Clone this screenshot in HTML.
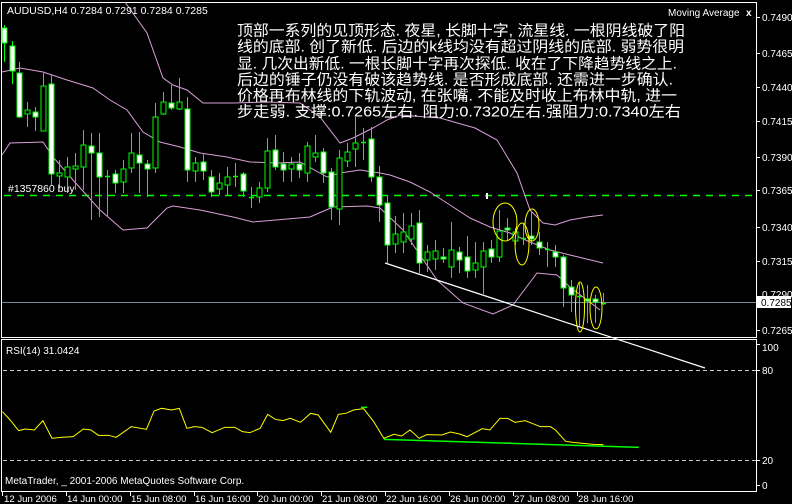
<!DOCTYPE html>
<html><head><meta charset="utf-8"><style>
html,body{margin:0;padding:0;background:#000;}
body{width:792px;height:504px;overflow:hidden;position:relative;}
svg{position:absolute;left:0;top:0;}
text{font-family:"Liberation Sans",sans-serif;}
</style></head><body>
<svg id="s" width="792" height="504" viewBox="0 0 792 504" xmlns="http://www.w3.org/2000/svg">
<rect x="0" y="0" width="792" height="504" fill="#000"/>
<rect x="1.5" y="2.5" width="755" height="335" fill="none" stroke="#fff" stroke-width="1"/>
<rect x="1.5" y="339.5" width="755" height="152" fill="none" stroke="#fff" stroke-width="1"/>
<line x1="4" y1="195.5" x2="756" y2="195.5" stroke="#00ff00" stroke-width="1.6" stroke-dasharray="7,6"/>
<rect x="486" y="193" width="2" height="6" fill="#fff"/>
<line x1="2" y1="302.5" x2="756" y2="302.5" stroke="#778899" stroke-width="1"/>
<g fill="none" stroke="#d8a0d8" stroke-width="1">
<polyline points="125,2 147,33 163,78 173,85 187,90 203,103 233,103 267,102 300,103 320,117 340,143 353,138 373,128 387,120 400,115 440,118 475,128 497,140 517,173 530,210 543,223 555,225 570,220 587,217 603,215"/>
<polyline points="2,72 20,68 43,72 67,80 93,88 110,100 127,110 143,132 160,142 180,147 200,153 227,157 250,162 277,163 300,162 327,177 340,173 360,170 380,173 390,175 410,182 430,192 450,205 470,218 490,227 510,233 530,242 550,250 570,255 603,263"/>
<polyline points="2,155 10,143 43,142 53,157 73,180 100,210 123,230 147,228 167,208 173,206 200,210 233,217 253,222 310,217 333,207 367,206 380,208 403,230 437,280 463,303 493,314 513,305 537,273 557,275 570,287 600,310"/>
</g>
<g id="candles"></g>
<line x1="385" y1="263" x2="705" y2="368" stroke="#fff" stroke-width="1.2"/>
<g fill="none" stroke="#ffff00" stroke-width="1">
<ellipse cx="505" cy="222" rx="12" ry="19"/>
<ellipse cx="522" cy="244" rx="7" ry="21"/>
<ellipse cx="532" cy="225" rx="7" ry="16"/>
<ellipse cx="580" cy="307" rx="4.5" ry="25"/>
<ellipse cx="596" cy="308" rx="6" ry="21"/>
</g>
<text x="7" y="14" font-size="10.5" fill="#fff">AUDUSD,H4  0.7284 0.7291 0.7284 0.7285</text>
<text x="668" y="16" font-size="10" fill="#fff">Moving Average</text>
<text x="746" y="16" font-size="10" font-weight="bold" fill="#fff">x</text>
<text x="8" y="192" font-size="10.5" fill="#fff">#1357860 buy</text>
<g font-size="15" fill="#fff">
<text x="237" y="35.5" textLength="448" lengthAdjust="spacingAndGlyphs" style="font-family:'Liberation Sans','Noto Sans CJK SC',sans-serif">顶部一系列的见顶形态. 夜星, 长脚十字, 流星线. 一根阴线破了阳</text>
<text x="237" y="51.5" textLength="447" lengthAdjust="spacingAndGlyphs" style="font-family:'Liberation Sans','Noto Sans CJK SC',sans-serif">线的底部. 创了新低. 后边的k线均没有超过阴线的底部. 弱势很明</text>
<text x="237" y="68.5" textLength="440" lengthAdjust="spacingAndGlyphs" style="font-family:'Liberation Sans','Noto Sans CJK SC',sans-serif">显. 几次出新低. 一根长脚十字再次探低. 收在了下降趋势线之上.</text>
<text x="237" y="84.5" textLength="436" lengthAdjust="spacingAndGlyphs" style="font-family:'Liberation Sans','Noto Sans CJK SC',sans-serif">后边的锤子仍没有破该趋势线. 是否形成底部. 还需进一步确认.</text>
<text x="237" y="100.5" textLength="440" lengthAdjust="spacingAndGlyphs" style="font-family:'Liberation Sans','Noto Sans CJK SC',sans-serif">价格再布林线的下轨波动, 在张嘴. 不能及时收上布林中轨, 进一</text>
<text x="237" y="116.5" textLength="444" lengthAdjust="spacingAndGlyphs" style="font-family:'Liberation Sans','Noto Sans CJK SC',sans-serif">步走弱. 支撑:0.7265左右. 阻力:0.7320左右.强阻力:0.7340左右</text>
</g>
<g font-size="10" fill="#fff">
<text x="762" y="21">0.7490</text>
<text x="762" y="57">0.7465</text>
<text x="762" y="91">0.7440</text>
<text x="762" y="125">0.7415</text>
<text x="762" y="161">0.7390</text>
<text x="762" y="194">0.7365</text>
<text x="762" y="231">0.7340</text>
<text x="762" y="265">0.7315</text>
<text x="762" y="298">0.7290</text>
<text x="762" y="334">0.7265</text>
</g>
<g stroke="#fff" stroke-width="1">
<line x1="757" y1="17.5" x2="760" y2="17.5"/><line x1="757" y1="53.5" x2="760" y2="53.5"/>
<line x1="757" y1="87.5" x2="760" y2="87.5"/><line x1="757" y1="121.5" x2="760" y2="121.5"/>
<line x1="757" y1="157.5" x2="760" y2="157.5"/><line x1="757" y1="190.5" x2="760" y2="190.5"/>
<line x1="757" y1="227.5" x2="760" y2="227.5"/><line x1="757" y1="261.5" x2="760" y2="261.5"/>
<line x1="757" y1="330.5" x2="760" y2="330.5"/>
<line x1="757" y1="344.5" x2="760" y2="344.5"/><line x1="757" y1="370.5" x2="760" y2="370.5"/>
<line x1="757" y1="460.5" x2="760" y2="460.5"/><line x1="757" y1="485.5" x2="760" y2="485.5"/>
</g>
<rect x="757" y="296" width="34" height="12" fill="#fff"/>
<text x="761" y="306" font-size="10" fill="#000">0.7285</text>
<g stroke="#ccc" stroke-width="1" stroke-dasharray="4,3">
<line x1="3" y1="370.5" x2="756" y2="370.5"/>
<line x1="3" y1="460.5" x2="756" y2="460.5"/>
</g>
<g transform="translate(0,330) scale(0.505,0.3333)" fill="none">
<polyline vector-effect="non-scaling-stroke" stroke="#ffff00" stroke-width="1" points="5,245 20,270 37,302 50,297 68,300 85,272 103,325 120,322 145,320 165,297 180,300 195,316 215,316 230,322 260,290 290,298 305,243 320,235 340,240 355,235 370,295 385,290 400,292 420,308 445,292 465,292 480,305 495,308 515,295 530,253 545,268 560,272 575,265 595,277 615,250 630,255 655,307 670,253 685,250 700,240 720,236 740,275 760,325 780,313 795,318 812,300 830,325 845,314 875,315 892,306 910,312 925,320 955,296 970,300 990,265 1005,265 1020,277 1040,272 1070,290 1090,290 1100,300 1120,334 1135,337 1155,340 1175,343 1195,344"/>
<polyline vector-effect="non-scaling-stroke" stroke="#00ff00" stroke-width="1.5" points="760,328 1265,352"/>
<polyline vector-effect="non-scaling-stroke" stroke="#00ff00" stroke-width="1.5" points="715,232 727,232"/>
</g>
<text x="6" y="354" font-size="10" fill="#fff">RSI(14) 31.0424</text>
<text x="5" y="484" font-size="10" fill="#fff">MetaTrader, _ 2001-2006 MetaQuotes Software Corp.</text>
<g font-size="10" fill="#fff">
<text x="762" y="351">100</text>
<text x="762" y="374">80</text>
<text x="762" y="464">20</text>
<text x="762" y="489">0</text>
</g>
<g font-size="9.6" fill="#fff">
<text x="4" y="502">12 Jun 2006</text>
<text x="67" y="502">14 Jun 00:00</text>
<text x="131" y="502">15 Jun 08:00</text>
<text x="195" y="502">16 Jun 16:00</text>
<text x="258" y="502">20 Jun 00:00</text>
<text x="322" y="502">21 Jun 08:00</text>
<text x="386" y="502">22 Jun 16:00</text>
<text x="450" y="502">26 Jun 00:00</text>
<text x="514" y="502">27 Jun 08:00</text>
<text x="578" y="502">28 Jun 16:00</text>
</g>
<g stroke="#fff" stroke-width="1">
<line x1="2.5" y1="492" x2="2.5" y2="496"/><line x1="66.5" y1="492" x2="66.5" y2="496"/>
<line x1="130.5" y1="492" x2="130.5" y2="496"/><line x1="194.5" y1="492" x2="194.5" y2="496"/>
<line x1="257.5" y1="492" x2="257.5" y2="496"/><line x1="321.5" y1="492" x2="321.5" y2="496"/>
<line x1="385.5" y1="492" x2="385.5" y2="496"/><line x1="449.5" y1="492" x2="449.5" y2="496"/>
<line x1="513.5" y1="492" x2="513.5" y2="496"/><line x1="577.5" y1="492" x2="577.5" y2="496"/>
</g>
</svg>
<script>
var C=[[4,28,43,25,62,'w'],[12,46,71,41,84,'w'],[19,73,117,62,118,'w'],[27,110,114,102,127,'g'],[35,112,117,107,131,'w'],[43,86,131,73,131,'g'],[51,84,174,75,185,'w'],[59,173,176,160,188,'g'],[67,167,177,157,193,'g'],[75,166,169,153,190,'g'],[83,145,167,130,190,'g'],[91,146,153,133,220,'w'],[99,153,177,133,217,'w'],[107,176,176,170,217,'d'],[115,174,183,170,193,'w'],[123,169,182,160,193,'g'],[131,153,168,133,173,'g'],[139,155,163,132,193,'w'],[147,164,169,160,197,'w'],[155,117,168,103,173,'g'],[163,102,114,92,115,'g'],[171,103,108,85,110,'w'],[179,102,109,78,110,'g'],[187,109,170,97,182,'w'],[195,163,171,157,182,'g'],[203,162,171,153,180,'w'],[211,177,192,170,197,'w'],[219,183,189,173,195,'g'],[227,177,185,167,195,'g'],[235,176,176,163,187,'d'],[243,174,191,172,197,'w'],[251,197,197,187,208,'d'],[259,188,197,182,203,'g'],[267,151,188,138,192,'g'],[275,150,167,135,170,'w'],[283,164,170,152,182,'w'],[291,164,169,157,182,'g'],[299,164,170,153,178,'w'],[307,146,173,142,182,'g'],[315,153,157,135,162,'g'],[323,152,173,148,183,'w'],[331,172,207,168,220,'w'],[339,158,209,150,225,'g'],[347,152,161,143,167,'g'],[355,143,149,117,167,'g'],[363,142,142,128,160,'d'],[371,139,177,127,182,'w'],[379,177,205,166,222,'w'],[387,203,245,195,263,'w'],[395,234,244,216,253,'g'],[403,232,242,213,253,'g'],[411,226,239,213,245,'g'],[419,223,263,210,273,'w'],[427,252,260,245,272,'g'],[435,251,259,240,270,'g'],[443,257,259,248,263,'w'],[451,250,267,222,278,'g'],[459,252,260,247,273,'w'],[467,257,271,236,278,'w'],[475,263,270,242,278,'g'],[483,251,267,242,294,'g'],[491,249,257,240,263,'w'],[499,231,257,210,262,'g'],[507,228,230,218,240,'w'],[515,232,241,228,245,'g'],[523,238,238,223,245,'d'],[531,236,239,212,245,'w'],[539,242,248,232,255,'w'],[547,249,249,242,267,'d'],[555,252,257,245,267,'w'],[563,257,288,255,307,'w'],[571,287,295,280,312,'w'],[579,296,296,283,327,'d'],[587,299,301,285,323,'w'],[595,299,302,295,323,'w'],[603,303,303,293,305,'d']];
var g=document.getElementById('candles'),h='';
C.forEach(function(c){var x=c[0];
h+='<line x1="'+(x+.5)+'" y1="'+c[3]+'" x2="'+(x+.5)+'" y2="'+c[4]+'" stroke="#00ff00" stroke-width="1"/>';
if(c[5]=='d'){h+='<line x1="'+(x-2)+'" y1="'+(c[1]+.5)+'" x2="'+(x+3)+'" y2="'+(c[1]+.5)+'" stroke="#00ff00" stroke-width="1.5"/>';}
else{var f=c[5]=='w'?'#fff':'#000';h+='<rect x="'+(x-2)+'" y="'+c[1]+'" width="5" height="'+Math.max(2,c[2]-c[1])+'" fill="'+f+'" stroke="#00ff00" stroke-width="1"/>';}
});
g.innerHTML=h;
</script>
</body></html>
